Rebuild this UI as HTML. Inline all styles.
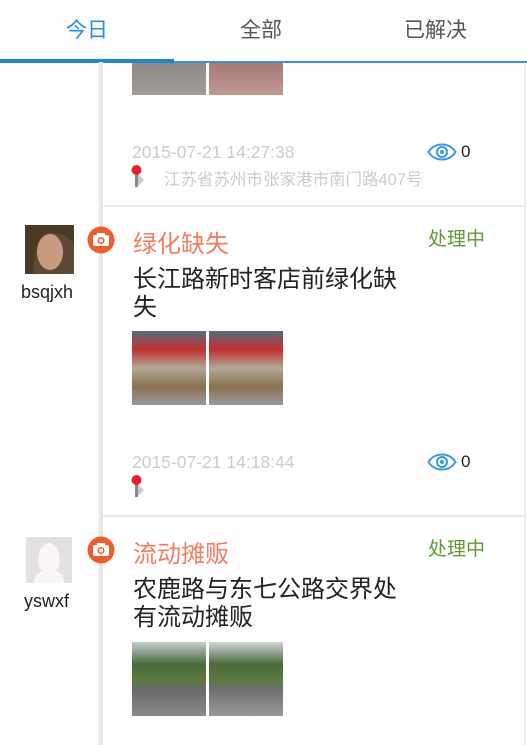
<!DOCTYPE html>
<html><head><meta charset="utf-8"><style>
*{margin:0;padding:0;box-sizing:border-box}
body{width:527px;height:745px;overflow:hidden;background:#fff;font-family:"Liberation Sans","Noto Sans CJK SC",sans-serif;position:relative}
.a{position:absolute;white-space:nowrap}
.tab{top:14px;font-size:21px;color:#555;}
.vline{left:99px;top:62px;width:4px;height:683px;background:#e6e6e6}
.sep{left:103px;height:2px;width:422px;background:#e8e8e8}
.title{font-size:24px;color:#f27d62}
.stat{font-size:19px;color:#5b9a34}
.desc{font-size:24px;color:#222;line-height:28px}
.ts{font-size:17.5px;color:#ccc}
.addr{font-size:16.5px;color:#ccc}
.img{width:74px;height:74px}
.name{font-size:18px;color:#222}
.cnt{font-size:17px;color:#222}
</style></head><body>
<div class="a" style="left:0;top:0;width:527px;height:62px;background:#fdfdfd"></div>
<div class="a tab" style="left:66px;color:#2a8fd4">今日</div>
<div class="a tab" style="left:240px">全部</div>
<div class="a tab" style="left:404px">已解决</div>
<div class="a" style="left:0;top:59px;width:174px;height:4px;background:#1f86cc"></div>
<div class="a" style="left:174px;top:61px;width:353px;height:2px;background:#3a95d4"></div>
<div class="a" style="left:524px;top:63px;width:2px;height:682px;background:#eee"></div>
<div class="a vline"></div>

<div class="a img" style="left:132px;top:63px;height:32px;background:linear-gradient(#8f8a86,#a29c98)"></div>
<div class="a img" style="left:209px;top:63px;height:32px;background:linear-gradient(#a87a76,#c09892)"></div>
<div class="a ts" style="left:132px;top:142px">2015-07-21 14:27:38</div>
<svg class="a" style="left:427px;top:143px" width="30" height="18" viewBox="0 0 30 18"><path d="M1.5 9C6 2 12 1.5 15 1.5S24 2 28.5 9C24 16 18 16.5 15 16.5S6 16 1.5 9Z" fill="none" stroke="#3b9ad8" stroke-width="2"/><circle cx="15" cy="9" r="5" fill="none" stroke="#3b9ad8" stroke-width="2"/><circle cx="15" cy="9" r="2" fill="#3b9ad8"/></svg>
<div class="a cnt" style="left:461px;top:142px">0</div>
<svg class="a" style="left:130px;top:164px" width="22" height="24" viewBox="0 0 22 24"><path d="M6 8L14 16L8 22Z" fill="#ccc"/><rect x="5" y="6" width="3" height="17" fill="#888"/><circle cx="6.5" cy="6" r="5" fill="#e8202a"/></svg>
<div class="a addr" style="left:164px;top:166px">江苏省苏州市张家港市南门路407号</div>
<div class="a sep" style="top:205px"></div>

<svg class="a" style="left:25px;top:225px" width="49" height="49"><rect width="49" height="49" fill="#5a4a36"/><ellipse cx="25" cy="27" rx="13" ry="18" fill="#c89a80"/><path d="M0 0H49V20C44 10 30 6 22 8C14 12 10 20 8 49H0Z" fill="#4a3a26"/></svg>
<div class="a name" style="left:21px;top:282px">bsqjxh</div>
<svg class="a" style="left:87px;top:226px" width="28" height="28" viewBox="0 0 28 28"><circle cx="14" cy="14" r="13.5" fill="#ea5e30"/><rect x="6" y="9" width="16" height="11" rx="2" fill="#fff"/><rect x="10" y="7" width="8" height="3" fill="#fff"/><circle cx="14" cy="14.5" r="3.5" fill="#ea5e30"/><circle cx="14" cy="14.5" r="2" fill="#fff"/></svg>
<div class="a title" style="left:133px;top:224px">绿化缺失</div>
<div class="a stat" style="left:428px;top:224px">处理中</div>
<div class="a desc" style="left:133px;top:266px">长江路新时客店前绿化缺<br>失</div>
<div class="a img" style="left:132px;top:331px;background:linear-gradient(#5a6a80 0,#c23030 25%,#b0a898 50%,#8a7050 75%,#9a9a9a 100%)"></div>
<div class="a img" style="left:209px;top:331px;background:linear-gradient(#5a6a80 0,#c23030 25%,#b0a898 50%,#8a7050 75%,#9a9a9a 100%)"></div>
<div class="a ts" style="left:132px;top:452px">2015-07-21 14:18:44</div>
<svg class="a" style="left:427px;top:453px" width="30" height="18" viewBox="0 0 30 18"><path d="M1.5 9C6 2 12 1.5 15 1.5S24 2 28.5 9C24 16 18 16.5 15 16.5S6 16 1.5 9Z" fill="none" stroke="#3b9ad8" stroke-width="2"/><circle cx="15" cy="9" r="5" fill="none" stroke="#3b9ad8" stroke-width="2"/><circle cx="15" cy="9" r="2" fill="#3b9ad8"/></svg>
<div class="a cnt" style="left:461px;top:452px">0</div>
<svg class="a" style="left:130px;top:474px" width="22" height="24" viewBox="0 0 22 24"><path d="M6 8L14 16L8 22Z" fill="#ccc"/><rect x="5" y="6" width="3" height="17" fill="#888"/><circle cx="6.5" cy="6" r="5" fill="#e8202a"/></svg>
<div class="a sep" style="top:515px"></div>

<svg class="a" style="left:26px;top:537px" width="46" height="46"><rect width="46" height="46" fill="#e4e0e0"/><path d="M8 46C8 38 12 36 16 34C12 30 12 24 13 18C14 10 19 6 23 6S32 10 33 18C34 24 34 30 30 34C34 36 38 38 38 46Z" fill="#f8f6f6"/></svg>
<div class="a name" style="left:24px;top:591px">yswxf</div>
<svg class="a" style="left:87px;top:536px" width="28" height="28" viewBox="0 0 28 28"><circle cx="14" cy="14" r="13.5" fill="#ea5e30"/><rect x="6" y="9" width="16" height="11" rx="2" fill="#fff"/><rect x="10" y="7" width="8" height="3" fill="#fff"/><circle cx="14" cy="14.5" r="3.5" fill="#ea5e30"/><circle cx="14" cy="14.5" r="2" fill="#fff"/></svg>
<div class="a title" style="left:133px;top:534px">流动摊贩</div>
<div class="a stat" style="left:428px;top:534px">处理中</div>
<div class="a desc" style="left:133px;top:576px">农鹿路与东七公路交界处<br>有流动摊贩</div>
<div class="a img" style="left:132px;top:642px;background:linear-gradient(#c8ccd0 0,#4a6a3a 30%,#5a7a40 50%,#6a6a6a 65%,#8a8a8a 100%)"></div>
<div class="a img" style="left:209px;top:642px;background:linear-gradient(#d0d4d8 0,#4a6a3a 30%,#5a7a40 50%,#707070 65%,#9a9a9a 100%)"></div>
</body></html>
